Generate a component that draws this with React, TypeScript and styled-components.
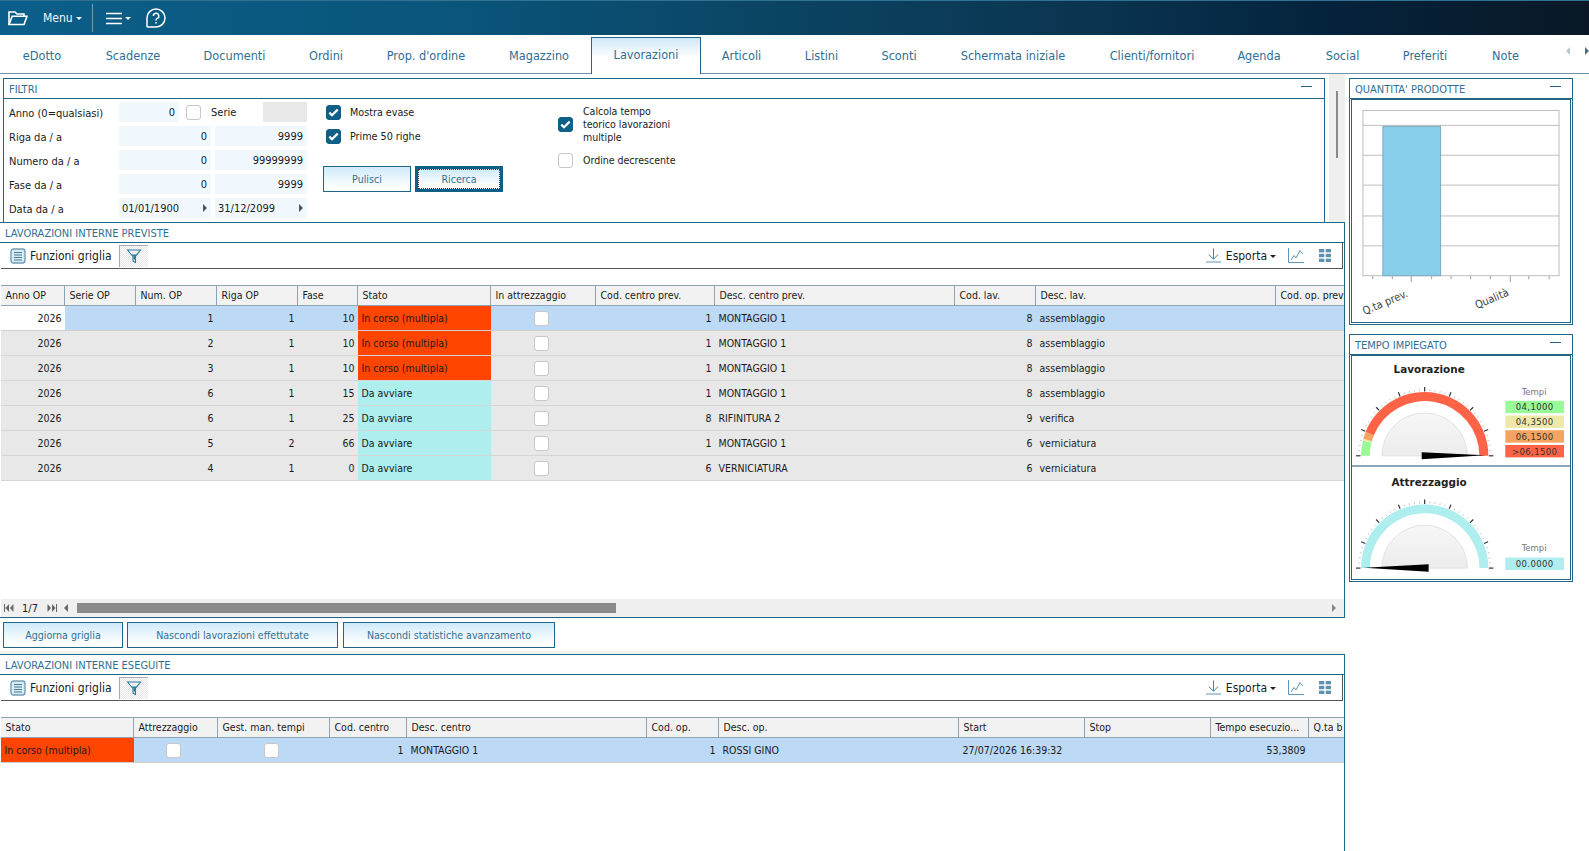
import React from "react";
import styled, { createGlobalStyle } from "styled-components";

const Global = createGlobalStyle`
  html, body { margin: 0; padding: 0; background: #fff; }
  body { font-family: "DejaVu Sans Condensed", "DejaVu Sans", sans-serif; font-stretch: condensed; font-size: 10.5px; color: #1a1a1a; overflow: hidden; }
  * { box-sizing: border-box; }
`;

const Page = styled.div`
  width: 1589px; height: 851px; display: flex; flex-direction: column; overflow: hidden; background: #fff;
`;
const TopBar = styled.header`
  height: 35px; flex: none; display: flex; align-items: center; padding-left: 8px; color: #fff;
  border-top: 1px solid #2f7292;
  background: linear-gradient(90deg, #0b5f8a 0%, #0a5479 30%, #0b4362 50%, #0a3551 68%, #04233d 83%, #0a1826 100%);
`;
const MenuLabel = styled.span`
  font-size: 12px; margin-left: 15px; color: #f4f8fb;
`;
const Caret = styled.span<{ $c?: string }>`
  display: inline-block; width: 0; height: 0; margin-left: 3px; margin-top: 1px;
  border-left: 3px solid transparent; border-right: 3px solid transparent; border-top: 3px solid ${p => p.$c || "#fff"};
`;
const BarSep = styled.span`
  width: 1px; height: 28px; margin: 0 13px 0 10px; background: #6f9fb7;
`;
const HelpWrap = styled.span`
  display: flex; margin-left: 15px;
`;
const TabBar = styled.nav`
  height: 39px; flex: none; display: flex; align-items: flex-end; padding: 0; border-bottom: 1px solid #6d94a8; position: relative;
`;
const Tab = styled.div<{ $active?: boolean; $w: number }>`
  width: ${p => p.$w}px; height: ${p => (p.$active ? "37px" : "36px")}; flex: none; display: flex; align-items: center; justify-content: center;
  font-size: 12.6px; color: #2f6f94;
  ${p => p.$active && `
    border: 1px solid #1f6787; border-bottom: 0; margin-bottom: -1px; height: 37px; padding-bottom: 3px; background: linear-gradient(180deg, #cfe9f9 0%, #fff 55%);
  `}
`;
const TabArrows = styled.div`
  position: absolute; right: 0; top: 12px; display: flex; gap: 15px;
`;
const Arrow = styled.span<{ $dir: "l" | "r"; $c: string }>`
  width: 0; height: 0; border-top: 4px solid transparent; border-bottom: 4px solid transparent;
  ${p => (p.$dir === "l" ? `border-right: 4px solid ${p.$c};` : `border-left: 4px solid ${p.$c};`)}
`;

const Body = styled.div`
  flex: 1; display: flex; min-height: 0;
`;
const LeftCol = styled.div`
  width: 1345px; flex: none; display: flex; flex-direction: column;
`;
const FilterRow = styled.div`
  height: 148px; flex: none; display: flex; padding: 4px 0 0 3px;
`;
const Panel = styled.section`
  border: 1px solid #1f6787; background: #fff;
`;
const FilterPanel = styled(Panel)`
  width: 1323px; height: 145px; border-bottom: 0;
`;
const TitleBar = styled.div`
  height: 20px; display: flex; align-items: center; justify-content: space-between; padding: 1px 12px 0 5px;
  border-bottom: 1px solid #1f6787; color: #2f6f94; font-size: 11px;
`;
const Collapse = styled.span`
  width: 11px; height: 1px; background: #1f6787; margin-top: -6px;
`;
const FilterBody = styled.div`
  display: flex; padding-top: 3px; height: 123px;
`;
const FieldGrid = styled.div`
  width: 304px; flex: none; display: grid; grid-template-columns: 106px 92px 92px; grid-auto-rows: 20px; row-gap: 4px; column-gap: 4px; padding-left: 5px;
`;
const FieldLabel = styled.div`
  display: flex; align-items: center; font-size: 11px; padding-top: 2px;
`;
const NumField = styled.div<{ $gray?: boolean; $date?: boolean }>`
  height: 20px; width: 92px; display: flex; align-items: center; justify-content: ${p => (p.$date ? "space-between" : "flex-end")};
  padding: 0 4px 0 3px; font-size: 11px; background: ${p => (p.$gray ? "#e8e8e8" : "#f0f8fe")};
`;
const AnnoCell = styled.div`
  grid-column: 2 / span 2; display: flex; align-items: center; width: 188px;
`;
const AnnoField = styled(NumField)`
  width: 60px;
`;
const SerieLabel = styled.span`
  font-size: 11px; margin: 0 0 0 10px; width: 52px;
`;
const SerieField = styled(NumField)`
  width: 44px;
`;
const CheckBoxBase = styled.span<{ $on?: boolean }>`
  width: 15px; height: 15px; flex: none; display: inline-flex; align-items: center; justify-content: center; border-radius: 3px;
  background: ${p => (p.$on ? "#0f5f86" : "#fff")}; border: ${p => (p.$on ? "1px solid #0f5f86" : "1.5px solid #c8c8c8")};
`;
const AnnoCheck = styled(CheckBoxBase)`
  margin-left: 7px;
`;
const MidCol = styled.div`
  width: 247px; flex: none; padding-left: 18px; display: flex; flex-direction: column;
`;
const CheckRow = styled.label`
  display: flex; align-items: center; height: 20px; margin-bottom: 4px; font-size: 10.7px; gap: 9px;
`;
const BtnRow = styled.div`
  display: flex; gap: 4px; margin: 16px 0 0 -3px;
`;
const Btn = styled.button<{ $w: number; $focus?: boolean }>`
  width: ${p => p.$w}px; height: 26px; font: inherit; font-size: 10.6px; color: #2f6f94; padding: 0; position: relative;
  border: ${p => (p.$focus ? "3px solid #0f5f86" : "1px solid #1f6787")};
  background: linear-gradient(180deg, #cfeafa 0%, #fff 85%);
  ${p => p.$focus && `outline: 1px dotted #3d3d3d; outline-offset: -4px;`}
`;
const RightChecks = styled.div`
  display: flex; flex-direction: column; gap: 9px; padding-top: 3px;
`;
const CheckRowWide = styled.div`
  display: flex; align-items: center; gap: 10px; font-size: 10.5px; line-height: 13px; margin-left: 3px;
`;
const WrapText = styled.span`
  width: 100px;
`;
const VScroll = styled.div`
  width: 16px; margin-left: 4px; margin-top: -4px; background: #efefef; display: flex; justify-content: center; padding-top: 17px;
`;
const VThumb = styled.div`
  width: 2px; height: 67px; background: #8a8a8a;
`;

const GridPanel = styled.section<{ $h: number }>`
  height: ${p => p.$h}px; flex: none; border-top: 1px solid #1f6787; border-right: 1px solid #1f6787; border-bottom: 1px solid #1f6787; display: flex; flex-direction: column; overflow: hidden; background: #fff;
`;
const GridTitle = styled.div`
  height: 20px; flex: none; display: flex; align-items: center; padding: 1px 0 0 5px; color: #2f6f94; font-size: 11px; border-bottom: 1px solid #1f6787;
`;
const Toolbar = styled.div`
  height: 26px; flex: none; margin: 0 1px 0 1px; display: flex; align-items: center; padding-left: 9px;
  border-bottom: 1px solid #555; border-right: 1px solid #555; font-size: 12px;
`;
const ToolText = styled.span`
  margin-left: 4px;
`;
const FilterToggle = styled.span`
  width: 29px; height: 22px; margin-left: 7px; display: flex; align-items: center; justify-content: center;
  border-left: 1px solid #aaa; border-top: 1px solid #aaa;
  background-image: repeating-conic-gradient(#e6e6e6 0 25%, #fff 0 50%); background-size: 2px 2px;
`;
const ToolRight = styled.div`
  margin-left: auto; display: flex; align-items: center; padding-right: 11px;
`;
const EsportaText = styled.span`
  margin-left: 5px;
`;
const ToolIcon = styled.span<{ $ml: number }>`
  display: flex; margin-left: ${p => p.$ml}px;
`;
const Gap = styled.div`
  height: 16px; flex: none;
`;
const GridTable = styled.div`
  flex: 1; min-height: 0; overflow: hidden; padding-left: 1px;
`;
const HeadRow = styled.div`
  display: flex; height: 21px; width: 1800px; border-top: 1px solid #8ea3b5; border-bottom: 1px solid #8ea3b5; background: #f2f2f2;
`;
const HeadCell = styled.div<{ $w: number }>`
  width: ${p => p.$w}px; flex: none; padding: 0 0 2px 4.5px; display: flex; align-items: center; white-space: nowrap; overflow: hidden; border-right: 1px solid #8ea3b5; font-size: 10.5px;
`;
const DataRow = styled.div<{ $sel?: boolean }>`
  display: flex; height: 25px; width: 1800px; border-bottom: 1px solid ${p => (p.$sel ? "#d0d0d0" : "#d6d6d6")}; background: ${p => (p.$sel ? "#bcd9f6" : "#e8e8e8")};
`;
const Cell = styled.div<{ $w: number; $right?: boolean; $bg?: string; $center?: boolean }>`
  width: ${p => p.$w}px; flex: none; display: flex; align-items: center; white-space: nowrap; overflow: hidden;
  padding: 0 ${p => (p.$center ? "5px" : "3.5px")} 0 ${p => (p.$center ? "0" : "3.5px")};
  justify-content: ${p => (p.$center ? "center" : p.$right ? "flex-end" : "flex-start")};
  ${p => p.$bg && `background: ${p.$bg};`}
`;
const PagerBar = styled.div`
  height: 18px; flex: none; margin: 0 0 0 1px; background: #f0f0f0; display: flex; align-items: center; position: relative; font-size: 11px;
`;
const PagerSlot = styled.span`
  display: flex; align-items: center; padding-left: 3px;
`;
const PagerCount = styled.span`
  margin: 0 9px 0 8px; color: #222;
`;
const PagerPrev = styled.span`
  display: flex; margin-left: 7px;
`;
const HThumb = styled.div`
  width: 539px; height: 10px; margin-left: 9px; background: #8a8a8a;
`;
const HRight = styled.span`
  margin-left: auto; margin-right: 8px; display: flex;
`;
const BtnBar = styled.div`
  height: 36px; flex: none; display: flex; gap: 4px; padding: 4px 0 0 3px; background: linear-gradient(180deg, #fff 0, #fff 33px, #f3f3f3 33px);
  & > button:last-child { margin-left: 1px; }
`;

const RightCol = styled.aside`
  flex: 1; display: flex; flex-direction: column; padding: 4px 0 0 4px; gap: 9px;
`;
const SidePanel = styled(Panel)<{ $h: number }>`
  width: 224px; height: ${p => p.$h}px; display: flex; flex-direction: column;
`;
const SideInner = styled.div`
  flex: 1; margin: 0 1px 1px 1px; border: 1px solid #1f6787; display: flex; flex-direction: column; overflow: hidden;
`;
const SideTitle = styled(TitleBar)`
  padding-right: 11px;
`;
const GaugeCell = styled.div<{ $divider?: boolean }>`
  display: flex; ${p => p.$divider && "border-bottom: 2px solid #8aa6b8;"}
`;

const Check = () => (
  <svg width="11" height="9" viewBox="0 0 11 9">
    <path d="M1.3 4.6 L4 7.3 L9.7 1.6" fill="none" stroke="#fff" strokeWidth="2.2" />
  </svg>
);
const CB = ({ on }: { on?: boolean }) => <CheckBoxBase $on={on}>{on && <Check />}</CheckBoxBase>;

const FolderIcon = () => (
  <svg width="20" height="16" viewBox="0 0 20 16" fill="none" stroke="#fff" strokeWidth="1.6">
    <path d="M1 14.5 V2 H7 L9 4 H16 V6" />
    <path d="M1 14.5 L4.2 6.2 H19 L16 14.5 Z" />
  </svg>
);
const BurgerIcon = () => (
  <svg width="16" height="13" viewBox="0 0 16 13" stroke="#fff" strokeWidth="1.5">
    <path d="M0 1.5H16M0 6.5H16M0 11.5H16" />
  </svg>
);
const HelpIcon = () => (
  <svg width="20" height="20" viewBox="0 0 20 20" fill="none" stroke="#fff" strokeWidth="1.5">
    <path d="M1 18.6 V10 A9 9 0 1 1 10 19 H2 Z" />
    <path d="M7.4 8 A2.7 2.7 0 1 1 11.3 10.4 Q10 11 10 12.6" />
    <path d="M10 14 V15.4" />
  </svg>
);
const ListIcon = () => (
  <svg width="16" height="16" viewBox="0 0 16 16">
    <rect x="1" y="1" width="14" height="14" rx="2.5" fill="#dce9f1" stroke="#6f9fb7" strokeWidth="1.4" />
    <path d="M4 4.5H12M4 7H12M4 9.5H12M4 12H12" stroke="#3f7d9e" strokeWidth="1" />
  </svg>
);
const FunnelIcon = () => (
  <svg width="16" height="16" viewBox="0 0 16 16" fill="none">
    <path d="M1.5 2 H14.5 L9.5 8.5 V14.5 L7 13 V8.5 Z" stroke="#2f7ba0" strokeWidth="1.1" />
    <path d="M5.5 6.5 H11 L9.5 8.5 V11.5 H7.5 V8.5 Z" fill="#2f7ba0" />
  </svg>
);
const DownloadIcon = () => (
  <svg width="15" height="15" viewBox="0 0 15 15" fill="none" stroke="#3f83a8" strokeWidth="1">
    <path d="M7.5 0.5 V11 M2.8 6.5 L7.5 11.2 L12.2 6.5" />
    <path d="M0 14 H15" strokeWidth="1.2" stroke="#7aa7c0" />
  </svg>
);
const LineChartIcon = () => (
  <svg width="16" height="15" viewBox="0 0 16 15" fill="none" stroke="#5f97b6" strokeWidth="1">
    <path d="M0.5 0 V14.5 H16" />
    <path d="M3 12 L6 7.5 L8 10 L12 2.5 L15 6" />
  </svg>
);
const TilesIcon = () => (
  <svg width="12" height="13" viewBox="0 0 12 13" fill="#5f93ad">
    <rect x="0" y="0" width="5.3" height="3.4" />
    <rect x="6.7" y="0" width="5.3" height="3.4" />
    <rect x="0" y="4.8" width="5.3" height="3.4" />
    <rect x="6.7" y="4.8" width="5.3" height="3.4" />
    <rect x="0" y="9.6" width="5.3" height="3.4" />
    <rect x="6.7" y="9.6" width="5.3" height="3.4" />
  </svg>
);
const PagerGlyph = ({ dir }: { dir: "first" | "last" }) => (
  <svg width="10" height="8" viewBox="0 0 10 8" fill="#666">
    {dir === "first" ? (
      <path d="M0 0H1V8H0Z M5 0V8L1.5 4Z M9.5 0V8L6 4Z" />
    ) : (
      <path d="M9 0H10V8H9Z M5 0V8L8.5 4Z M0.5 0V8L4 4Z" />
    )}
  </svg>
);

const GridToolbar = () => (
  <Toolbar>
    <ListIcon />
    <ToolText>Funzioni griglia</ToolText>
    <FilterToggle><FunnelIcon /></FilterToggle>
    <ToolRight>
      <DownloadIcon />
      <EsportaText>Esporta</EsportaText>
      <Caret $c="#222" />
      <ToolIcon $ml={12}><LineChartIcon /></ToolIcon>
      <ToolIcon $ml={15}><TilesIcon /></ToolIcon>
    </ToolRight>
  </Toolbar>
);

const tabs: [string, number][] = [
  ["eDotto", 84], ["Scadenze", 98], ["Documenti", 105], ["Ordini", 78], ["Prop. d'ordine", 122], ["Magazzino", 104],
  ["Lavorazioni", 110], ["Articoli", 81], ["Listini", 79], ["Sconti", 76], ["Schermata iniziale", 152], ["Clienti/fornitori", 126],
  ["Agenda", 88], ["Social", 79], ["Preferiti", 86], ["Note", 75],
];

type Col = { t: string; w: number };
const cols1: Col[] = [
  { t: "Anno OP", w: 64 }, { t: "Serie OP", w: 71 }, { t: "Num. OP", w: 81 }, { t: "Riga OP", w: 81 },
  { t: "Fase", w: 60 }, { t: "Stato", w: 133 }, { t: "In attrezzaggio", w: 105 }, { t: "Cod. centro prev.", w: 119 },
  { t: "Desc. centro prev.", w: 240 }, { t: "Cod. lav.", w: 81 }, { t: "Desc. lav.", w: 240 }, { t: "Cod. op. prev.", w: 100 },
];
const RED = "#ff4500";
const CYAN = "#afeeee";
const IN = "In corso (multipla)";
const DA = "Da avviare";
const rows1: [string, string, string, string, string, string, string, string, string][] = [
  ["2026", "1", "1", "10", IN, "1", "MONTAGGIO 1", "8", "assemblaggio"],
  ["2026", "2", "1", "10", IN, "1", "MONTAGGIO 1", "8", "assemblaggio"],
  ["2026", "3", "1", "10", IN, "1", "MONTAGGIO 1", "8", "assemblaggio"],
  ["2026", "6", "1", "15", DA, "1", "MONTAGGIO 1", "8", "assemblaggio"],
  ["2026", "6", "1", "25", DA, "8", "RIFINITURA 2", "9", "verifica"],
  ["2026", "5", "2", "66", DA, "1", "MONTAGGIO 1", "6", "verniciatura"],
  ["2026", "4", "1", "0", DA, "6", "VERNICIATURA", "6", "verniciatura"],
];
const cols2: Col[] = [
  { t: "Stato", w: 133 }, { t: "Attrezzaggio", w: 84 }, { t: "Gest. man. tempi", w: 112 }, { t: "Cod. centro", w: 77 },
  { t: "Desc. centro", w: 240 }, { t: "Cod. op.", w: 72 }, { t: "Desc. op.", w: 240 }, { t: "Start", w: 126 }, { t: "Stop", w: 126 },
  { t: "Tempo esecuzio...", w: 98 }, { t: "Q.ta b", w: 80 },
];

const Bar = () => {
  const grid = [25.5, 55.5, 85.5, 116.5, 146.5];
  const ticks = [20.4, 40, 59, 79.5, 99, 118.6, 138.5, 158.5, 177, 197.5];
  return (
    <svg width="220" height="223" viewBox="0 0 220 223">
      <rect x="10.5" y="10.5" width="197" height="166" fill="#fff" stroke="#bdbdbd" />
      {grid.map(y => <line key={y} x1="10.5" x2="207.5" y1={y} y2={y} stroke="#bdbdbd" />)}
      <rect x="30.5" y="26.5" width="58" height="150" fill="#87ceeb" stroke="#7ba9c0" />
      {ticks.map((x, i) => (
        <line key={x} x1={x} x2={x} y1="177" y2={i === 2 || i === 7 ? 183 : 180} stroke="#9a9a9a" />
      ))}
      <text x="12" y="216" fontSize="11" fill="#444" transform="rotate(-23 12 216)" fontFamily="DejaVu Sans Condensed, DejaVu Sans, sans-serif">Q.ta prev.</text>
      <text x="125" y="210" fontSize="11" fill="#444" transform="rotate(-23 125 210)" fontFamily="DejaVu Sans Condensed, DejaVu Sans, sans-serif">Qualità</text>
    </svg>
  );
};

const polar = (cx: number, cy: number, r: number, deg: number) => {
  const a = (deg * Math.PI) / 180;
  return [cx - r * Math.cos(a), cy - r * Math.sin(a)] as const;
};
const band = (cx: number, cy: number, from: number, to: number, color: string) => {
  const [x1, y1] = polar(cx, cy, 64, from);
  const [x2, y2] = polar(cx, cy, 64, to);
  const [x3, y3] = polar(cx, cy, 55, to);
  const [x4, y4] = polar(cx, cy, 55, from);
  return <path key={from} d={`M${x1} ${y1} A64 64 0 0 1 ${x2} ${y2} L${x3} ${y3} A55 55 0 0 0 ${x4} ${y4} Z`} fill={color} />;
};

type GaugeProps = {
  h: number; cy: number; title: string; titleY: number; bands: [number, number, string][]; needle: string;
  legend: [string, string][]; legendTop: number;
};
const Gauge = ({ h, cy, title, titleY, bands, needle, legend, legendTop }: GaugeProps) => {
  const cx = 73;
  const ticks: React.ReactNode[] = [];
  for (let i = 0; i <= 40; i++) {
    const deg = i * 4.5;
    const major = i % 5 === 0;
    const [x1, y1] = polar(cx, cy, major ? 64.5 : 65, deg);
    const [x2, y2] = polar(cx, cy, major ? 69 : 67, deg);
    ticks.push(<line key={i} x1={x1} y1={y1} x2={x2} y2={y2} stroke={major ? "#333" : "#bbb"} strokeWidth={major ? 1.2 : 0.8} />);
  }
  const [lx, ly] = polar(cx, cy, 43, 0);
  const [rx, ry] = polar(cx, cy, 43, 180);
  const gid = `disc-${title}`;
  return (
    <svg width="219" height={h} viewBox={`0 0 219 ${h}`} fontFamily="DejaVu Sans, sans-serif">
      <defs>
        <linearGradient id={gid} x1="0" x2="0" y1="0" y2="1">
          <stop offset="0" stopColor="#f7f7f7" />
          <stop offset="1" stopColor="#ececec" />
        </linearGradient>
      </defs>
      <text x="77.5" y={titleY} textAnchor="middle" fontSize="10.5" fontWeight="bold" fill="#222" style={{ fontStretch: "normal" }}>{title}</text>
      {ticks}
      <path d={`M${lx} ${ly} A43 43 0 0 1 ${rx} ${ry} Z`} fill={`url(#${gid})`} stroke="#e2e2e2" />
      {bands.map(b => band(cx, cy, b[0], b[1], b[2]))}
      <path d={needle} fill="#000" />
      <text x="183" y={legendTop - 6.2} textAnchor="middle" fontSize="9.5" fill="#777">Tempi</text>
      {legend.map((l, i) => (
        <g key={l[0]}>
          <rect x="154" y={legendTop + i * 14.8} width="59" height="12.5" fill={l[1]} />
          <text x="183.5" y={legendTop + i * 14.8 + 9.8} textAnchor="middle" fontSize="9.5" letterSpacing="0.4" fill="#333">{l[0]}</text>
        </g>
      ))}
    </svg>
  );
};

const GridHead = ({ cols }: { cols: Col[] }) => (
  <HeadRow>{cols.map(c => <HeadCell key={c.t} $w={c.w}>{c.t}</HeadCell>)}</HeadRow>
);

export default function App() {
  return (
    <Page>
      <Global />
      <TopBar>
        <FolderIcon />
        <MenuLabel>Menu</MenuLabel>
        <Caret />
        <BarSep />
        <BurgerIcon />
        <Caret />
        <HelpWrap><HelpIcon /></HelpWrap>
      </TopBar>
      <TabBar>
        {tabs.map(([t, w]) => <Tab key={t} $w={w} $active={t === "Lavorazioni"}>{t}</Tab>)}
        <TabArrows>
          <Arrow $dir="l" $c="#b8c6cf" />
          <Arrow $dir="r" $c="#49708a" />
        </TabArrows>
      </TabBar>
      <Body>
        <LeftCol>
          <FilterRow>
            <FilterPanel>
              <TitleBar>FILTRI<Collapse /></TitleBar>
              <FilterBody>
                <FieldGrid>
                  <FieldLabel>Anno (0=qualsiasi)</FieldLabel>
                  <AnnoCell>
                    <AnnoField>0</AnnoField>
                    <AnnoCheck />
                    <SerieLabel>Serie</SerieLabel>
                    <SerieField $gray />
                  </AnnoCell>
                  <FieldLabel>Riga da / a</FieldLabel><NumField>0</NumField><NumField>9999</NumField>
                  <FieldLabel>Numero da / a</FieldLabel><NumField>0</NumField><NumField>99999999</NumField>
                  <FieldLabel>Fase da / a</FieldLabel><NumField>0</NumField><NumField>9999</NumField>
                  <FieldLabel>Data da / a</FieldLabel>
                  <NumField $date>01/01/1900<Arrow $dir="r" $c="#555" /></NumField>
                  <NumField $date>31/12/2099<Arrow $dir="r" $c="#555" /></NumField>
                </FieldGrid>
                <MidCol>
                  <CheckRow><CB on />Mostra evase</CheckRow>
                  <CheckRow><CB on />Prime 50 righe</CheckRow>
                  <BtnRow>
                    <Btn $w={88}>Pulisci</Btn>
                    <Btn $w={88} $focus>Ricerca</Btn>
                  </BtnRow>
                </MidCol>
                <RightChecks>
                  <CheckRowWide><CB on /><WrapText>Calcola tempo teorico lavorazioni multiple</WrapText></CheckRowWide>
                  <CheckRowWide><CB />Ordine decrescente</CheckRowWide>
                </RightChecks>
              </FilterBody>
            </FilterPanel>
            <VScroll><VThumb /></VScroll>
          </FilterRow>
          <GridPanel $h={396}>
            <GridTitle>LAVORAZIONI INTERNE PREVISTE</GridTitle>
            <GridToolbar />
            <Gap />
            <GridTable>
              <GridHead cols={cols1} />
              {rows1.map((r, i) => (
                <DataRow key={i} $sel={i === 0}>
                  <Cell $w={64} $right $bg={i === 0 ? "#fff" : undefined}>{r[0]}</Cell>
                  <Cell $w={71} />
                  <Cell $w={81} $right>{r[1]}</Cell>
                  <Cell $w={81} $right>{r[2]}</Cell>
                  <Cell $w={60} $right>{r[3]}</Cell>
                  <Cell $w={133} $bg={r[4] === IN ? RED : CYAN}>{r[4]}</Cell>
                  <Cell $w={105} $center><CB /></Cell>
                  <Cell $w={119} $right>{r[5]}</Cell>
                  <Cell $w={240}>{r[6]}</Cell>
                  <Cell $w={81} $right>{r[7]}</Cell>
                  <Cell $w={240}>{r[8]}</Cell>
                </DataRow>
              ))}
            </GridTable>
            <PagerBar>
              <PagerSlot><PagerGlyph dir="first" /></PagerSlot>
              <PagerCount>1/7</PagerCount>
              <PagerGlyph dir="last" />
              <PagerPrev><Arrow $dir="l" $c="#666" /></PagerPrev>
              <HThumb />
              <HRight><Arrow $dir="r" $c="#888" /></HRight>
            </PagerBar>
          </GridPanel>
          <BtnBar>
            <Btn $w={120}>Aggiorna griglia</Btn>
            <Btn $w={211}>Nascondi lavorazioni effettutate</Btn>
            <Btn $w={212}>Nascondi statistiche avanzamento</Btn>
          </BtnBar>
          <GridPanel $h={210}>
            <GridTitle>LAVORAZIONI INTERNE ESEGUITE</GridTitle>
            <GridToolbar />
            <Gap />
            <GridTable>
              <GridHead cols={cols2} />
              <DataRow $sel>
                <Cell $w={133} $bg={RED}>{IN}</Cell>
                <Cell $w={84} $center><CB /></Cell>
                <Cell $w={112} $center><CB /></Cell>
                <Cell $w={77} $right>1</Cell>
                <Cell $w={240}>MONTAGGIO 1</Cell>
                <Cell $w={72} $right>1</Cell>
                <Cell $w={240}>ROSSI GINO</Cell>
                <Cell $w={126}>27/07/2026 16:39:32</Cell>
                <Cell $w={126} />
                <Cell $w={98} $right>53,3809</Cell>
              </DataRow>
            </GridTable>
          </GridPanel>
        </LeftCol>
        <RightCol>
          <SidePanel $h={247}>
            <SideTitle>QUANTITA' PRODOTTE<Collapse /></SideTitle>
            <SideInner><Bar /></SideInner>
          </SidePanel>
          <SidePanel $h={248}>
            <SideTitle>TEMPO IMPIEGATO<Collapse /></SideTitle>
            <SideInner>
              <GaugeCell $divider>
                <Gauge
                  h={109} cy={100} title="Lavorazione" titleY={17}
                  bands={[[0, 14, "#98fb98"], [14, 15.5, "#eee8aa"], [15.5, 22, "#f4a460"], [22, 180, "#ff6347"]]}
                  needle="M70 96.5 L134 99.5 L70 103.5 Z"
                  legend={[["04,1000", "#98fb98"], ["04,3500", "#eee8aa"], ["06,1500", "#f4a460"], [">06,1500", "#ff6347"]]}
                  legendTop={44.7}
                />
              </GaugeCell>
              <GaugeCell>
                <Gauge
                  h={113} cy={101.3} title="Attrezzaggio" titleY={19}
                  bands={[[0, 180, "#afeeee"]]}
                  needle="M77 97.5 L12 101 L77 105 Z"
                  legend={[["00.0000", "#afeeee"]]}
                  legendTop={90.7}
                />
              </GaugeCell>
            </SideInner>
          </SidePanel>
        </RightCol>
      </Body>
    </Page>
  );
}
